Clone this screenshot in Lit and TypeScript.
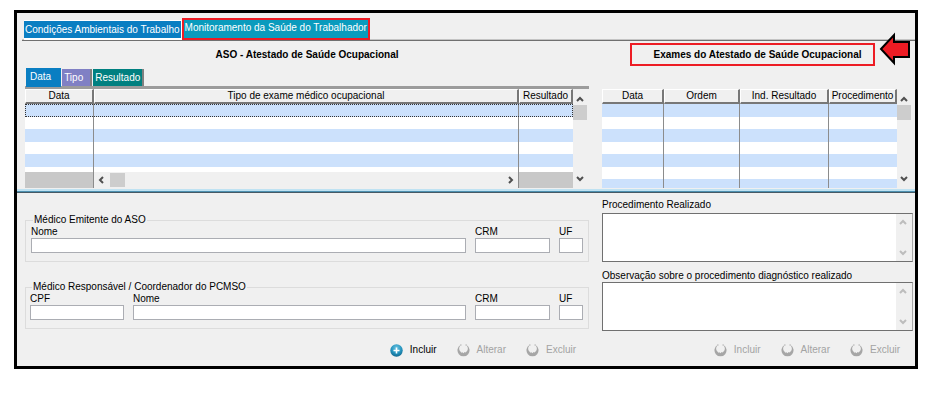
import { LitElement, html, css, svg } from "lit";
import { customElement, property } from "lit/decorators.js";

@customElement("chevron-icon")
class ChevronIcon extends LitElement {
  @property() dir: "up" | "down" | "left" | "right" = "up";

  static styles = css`
    :host { display: block; width: 8px; height: 8px; }
    svg { display: block; }
    path { fill: none; stroke: currentColor; stroke-width: 2; }
  `;

  render() {
    const d = {
      up: "M1 6L4 3L7 6",
      down: "M1 2L4 5L7 2",
      left: "M6 1L3 4L6 7",
      right: "M2 1L5 4L2 7",
    }[this.dir];
    return html`<svg width="8" height="8" viewBox="0 0 8 8" aria-hidden="true">${svg`<path d=${d} />`}</svg>`;
  }
}

@customElement("v-scroll")
class VScroll extends LitElement {
  @property({ type: Boolean, reflect: true }) disabled = false;

  static styles = css`
    :host {
      display: flex; flex-direction: column; align-items: center;
      box-sizing: border-box; width: 16px; padding: 6px 2px 5px 0;
      background: #f0f0f0; color: #505050;
    }
    :host([disabled]) { padding: 4px 2px 4px 0; color: #bdbdbd; }
    .thumb { width: 14px; height: 15px; margin-top: 2px; background: #cdcdcd; }
    .space { flex: 1; }
  `;

  render() {
    return html`
      <chevron-icon dir="up"></chevron-icon>
      ${this.disabled ? "" : html`<div class="thumb"></div>`}
      <div class="space"></div>
      <chevron-icon dir="down"></chevron-icon>
    `;
  }
}

@customElement("action-bar")
class ActionBar extends LitElement {
  @property({ type: Boolean }) adding = false;

  static styles = css`
    :host { display: flex; justify-content: flex-end; gap: 20px; padding-right: 13px; }
    button {
      display: flex; align-items: center; gap: 7px; height: 16px; padding: 0;
      border: 0; background: none; color: #000;
      font: 10px/12px "Liberation Sans", Arial, sans-serif;
    }
    button:disabled { color: #a3a3a3; }
    svg { display: block; }
  `;

  private plus() {
    return html`<svg width="13" height="13" viewBox="0 0 13 13" aria-hidden="true">
      <defs><radialGradient id="g" cx="0.5" cy="0.3" r="0.7">
        <stop offset="0" stop-color="#6cc4e2" /><stop offset="0.6" stop-color="#2493bd" /><stop offset="1" stop-color="#12688f" />
      </radialGradient></defs>
      <circle cx="6.5" cy="6.5" r="6.2" fill="url(#g)" />
      <path d="M6.5 3.5V9.5M3.5 6.5H9.5" stroke="#fff" stroke-width="1.6" />
    </svg>`;
  }

  private muted() {
    return html`<svg width="13" height="13" viewBox="0 0 13 13" aria-hidden="true">
      <path d="M3.5 1A6.05 6.05 0 1 0 9.5 1L9.9 2A4.5 4.5 0 0 1 9.6 7.6L8.6 8.6L7.6 8L6.6 9.2L5.4 8.2L4.4 8.8L3.4 7.6A4.5 4.5 0 0 1 3.1 2Z" fill="#a6a6a6" />
      <path d="M3 1H4.6M8.4 1H10" stroke="#b4b4b4" />
    </svg>`;
  }

  render() {
    return html`
      <button type="button" ?disabled=${!this.adding}>${this.adding ? this.plus() : this.muted()}Incluir</button>
      <button type="button" disabled>${this.muted()}Alterar</button>
      <button type="button" disabled>${this.muted()}Excluir</button>
    `;
  }
}

@customElement("app-root")
class AppRoot extends LitElement {
  static styles = css`
    :host {
      display: block; padding: 10px 28px 32px 14px; background: #fff; color: #000;
      font: 10px/12px "Liberation Sans", Arial, sans-serif;
    }
    * { box-sizing: border-box; }
    .window { position: relative; border: 3px solid #000; background: #f0f0f0; }
    .pages {
      display: flex; align-items: flex-end; height: 28px; margin-left: 5px; padding-left: 2px;
      border-bottom: 1px solid #707070; box-shadow: inset 0 -1px #c4c4c4;
    }
    button { margin: 0; border: 0; font: inherit; color: #fff; white-space: nowrap; }
    .page { height: 20px; padding: 0 1px; background: #0a7ec2; border: 1px solid #fff; border-width: 1px 1px 2px 0; }
    .page.current { height: 22px; padding: 0 1px 2px; background: #0a9bbd; border: 2px solid #ed1c24; }
    .cols { display: grid; grid-template-columns: 564fr 311fr; column-gap: 13px; padding: 0 2px 0 8px; }
    .head { height: 48px; display: flex; flex-direction: column; justify-content: space-between; }
    h2 { margin: 2px 0 0; font-size: 10px; line-height: 23px; text-align: center; }
    .marked { margin: 2px 38px 0 28px; padding-left: 10px; line-height: 19px; border: 2px solid #ed1c24; }
    .views { display: flex; align-items: flex-end; gap: 1px; padding-left: 1px; border-bottom: 3px solid #9c9c9c; height: 22px; }
    .view { height: 17px; border-right: 2px solid #808080; }
    .data { height: 19px; padding: 0 10px 2px 4px; margin-bottom: -1px; background: #0a7ec2; border-right: 0; }
    .tipo { padding: 0 7px 0 2px; background: #8080c4; }
    .result { padding: 0 2px; background: #008080; }
    .grid { display: flex; height: 99px; overflow: hidden; }
    table { flex: 1; width: 0; table-layout: fixed; border-collapse: separate; border-spacing: 0; }
    th {
      height: 15px; padding: 0; font-weight: normal; line-height: 12px; white-space: nowrap;
      border: 1px solid #fff; border-right: 2px solid #777; border-bottom: 2px solid #777; background: #f0f0f0;
    }
    td { height: 12px; padding: 0; border-right: 1px solid #8c8c8c; background: #fff; }
    td:last-child { border-right: 0; }
    .blue td { height: 13px; background: #cce1fc; }
    .focus { outline: 1px dotted #333; outline-offset: -1px; }
    .short td { height: 5px; }
    .cut td { height: 9px; background: #cce1fc; }
    .foot td { height: 16px; background: #c8c8c8; }
    .foot .track { background: #f0f0f0; }
    .hscroll { display: flex; align-items: center; padding: 0 3px; color: #505050; }
    .thumb { width: 15px; height: 14px; margin: 1px auto 1px 5px; background: #cdcdcd; }
    .c-date { width: 69px; } .c-result { width: 54px; }
    .c-edate { width: 62px; } .c-order { width: 76px; } .c-proc { width: 68px; }
    .split { height: 4px; margin-top: 1px; border-top: 2px solid #bfe2f2; border-bottom: 1px solid #455a66; background: #4d90b0; }
    .lower { padding-top: 6px; padding-bottom: 8px; }
    .left, .right { display: flex; flex-direction: column; }
    fieldset {
      min-width: 0; margin: 0; padding: 0 5px 8px; border: 1px solid #dcdcdc;
      display: grid; grid-template-columns: 1fr 75px 24px; column-gap: 9px;
    }
    legend { margin-left: 2px; padding: 0 1px; }
    .issuer { margin-top: 15px; }
    .resp { margin-top: 19px; padding-left: 4px; grid-template-columns: 94px 1fr 75px 24px; }
    label { display: block; line-height: 12px; white-space: nowrap; }
    input { display: block; width: 100%; height: 15px; margin: 0; padding: 0 2px; border: 1px solid #abadb3; border-radius: 0; background: #fff; font: inherit; }
    .memo { display: flex; height: 49px; border: 1px solid #707070; border-right-color: #a8a8a8; background: #fff; }
    textarea { flex: 1; min-width: 0; margin: 0; padding: 2px; border: 0; resize: none; background: #fff; font: inherit; }
    .memo-label { margin-bottom: 2px; }
    .memo + .memo-label { margin-top: 8px; margin-bottom: 0; }
    .left action-bar { margin-top: auto; }
    .right action-bar { margin-top: 11px; }
    .pointer { position: absolute; right: 4px; top: 19px; }
  `;

  private rows(kinds: string[], cols: number) {
    return kinds.map(
      (k) => html`<tr class=${k}>${Array.from({ length: cols }, () => html`<td></td>`)}</tr>`
    );
  }

  render() {
    return html`
      <main class="window">
        <nav class="pages" role="tablist">
          <button class="page" role="tab" type="button">Condições Ambientais do Trabalho</button>
          <button class="page current" role="tab" type="button" aria-selected="true">Monitoramento da Saúde do Trabalhador</button>
        </nav>
        <div class="cols">
          <section>
            <div class="head">
              <h2>ASO - Atestado de Saúde Ocupacional</h2>
              <div class="views" role="tablist">
                <button class="view data" role="tab" type="button" aria-selected="true">Data</button>
                <button class="view tipo" role="tab" type="button">Tipo</button>
                <button class="view result" role="tab" type="button">Resultado</button>
              </div>
            </div>
            <div class="grid">
              <table>
                <colgroup><col class="c-date" /><col /><col class="c-result" /></colgroup>
                <thead><tr><th>Data</th><th>Tipo de exame médico ocupacional</th><th>Resultado</th></tr></thead>
                <tbody>${this.rows(["blue focus", "", "blue", "", "blue", "short"], 3)}</tbody>
                <tfoot><tr class="foot"><td></td><td class="track"><div class="hscroll">
                  <chevron-icon dir="left"></chevron-icon><div class="thumb"></div><chevron-icon dir="right"></chevron-icon>
                </div></td><td></td></tr></tfoot>
              </table>
              <v-scroll></v-scroll>
            </div>
          </section>
          <section>
            <div class="head"><h2 class="marked">Exames do Atestado de Saúde Ocupacional</h2></div>
            <div class="grid">
              <table>
                <colgroup><col class="c-edate" /><col class="c-order" /><col /><col class="c-proc" /></colgroup>
                <thead><tr><th>Data</th><th>Ordem</th><th>Ind. Resultado</th><th>Procedimento</th></tr></thead>
                <tbody>${this.rows(["blue", "", "blue", "", "blue", "", "cut"], 4)}</tbody>
              </table>
              <v-scroll></v-scroll>
            </div>
          </section>
        </div>
        <div class="split"></div>
        <div class="cols lower">
          <section class="left">
            <fieldset class="issuer">
              <legend>Médico Emitente do ASO</legend>
              <div><label for="n1">Nome</label><input id="n1" type="text" /></div>
              <div><label for="c1">CRM</label><input id="c1" type="text" /></div>
              <div><label for="u1">UF</label><input id="u1" type="text" /></div>
            </fieldset>
            <fieldset class="resp">
              <legend>Médico Responsável / Coordenador do PCMSO</legend>
              <div><label for="cpf">CPF</label><input id="cpf" type="text" /></div>
              <div><label for="n2">Nome</label><input id="n2" type="text" /></div>
              <div><label for="c2">CRM</label><input id="c2" type="text" /></div>
              <div><label for="u2">UF</label><input id="u2" type="text" /></div>
            </fieldset>
            <action-bar adding></action-bar>
          </section>
          <section class="right">
            <label class="memo-label" for="proc">Procedimento Realizado</label>
            <div class="memo"><textarea id="proc"></textarea><v-scroll disabled></v-scroll></div>
            <label class="memo-label" for="obs">Observação sobre o procedimento diagnóstico realizado</label>
            <div class="memo"><textarea id="obs"></textarea><v-scroll disabled></v-scroll></div>
            <action-bar></action-bar>
          </section>
        </div>
        <svg class="pointer" width="32" height="34" viewBox="0 0 32 34" aria-hidden="true">
          <path d="M2 17L15 3V10H30V25H15V31Z" fill="#ed1c24" stroke="#000" stroke-width="2" />
        </svg>
      </main>
    `;
  }
}
